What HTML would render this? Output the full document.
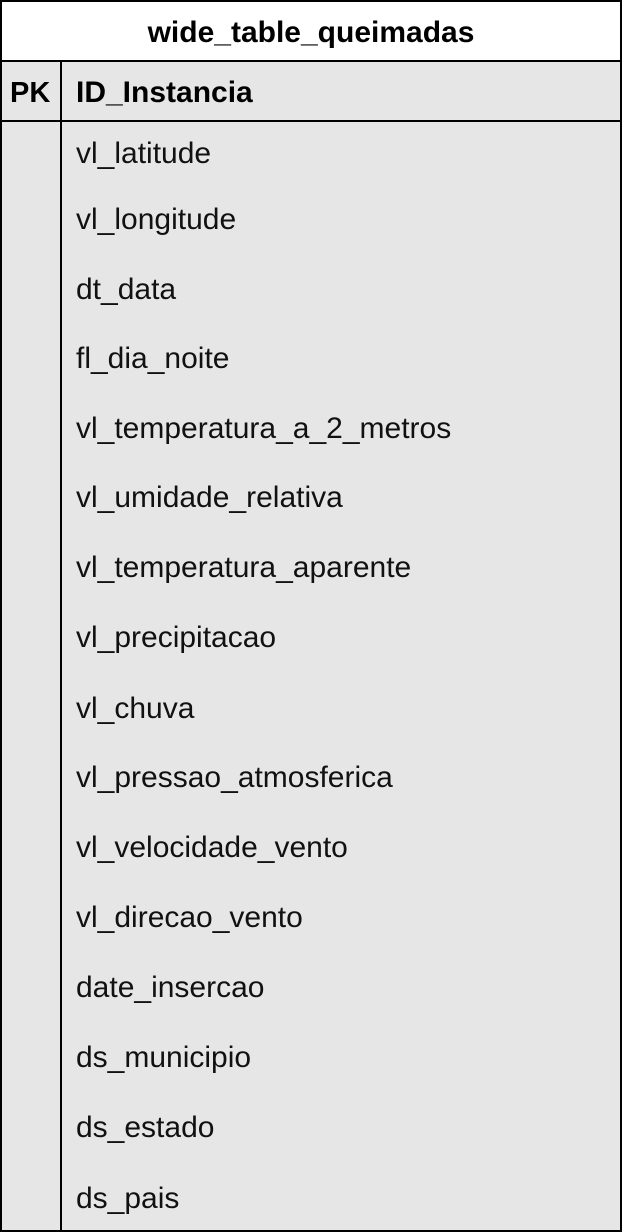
<!DOCTYPE html>
<html><head><style>
body{margin:0;width:622px;height:1232px;overflow:hidden;background:#fff;font-family:"Liberation Sans",Arial,sans-serif;}
.b{position:absolute;background:#000;}
.t{position:absolute;left:76px;font-size:30px;line-height:40px;color:#111;white-space:nowrap;}
</style></head><body>
<div style="position:absolute;left:0;top:61px;width:622px;height:1171px;background:#e6e6e6"></div>
<div class="b" style="left:0;top:0;width:622px;height:2px"></div>
<div class="b" style="left:0;top:0;width:2px;height:1232px"></div>
<div class="b" style="left:620px;top:0;width:2px;height:1232px"></div>
<div class="b" style="left:0;top:1230px;width:622px;height:2px"></div>
<div class="b" style="left:0;top:60px;width:622px;height:2px"></div>
<div class="b" style="left:0;top:120px;width:622px;height:2px"></div>
<div class="b" style="left:60px;top:61px;width:2px;height:1171px"></div>
<div style="position:absolute;left:0;top:13px;width:622px;text-align:center;font-size:30px;font-weight:bold;line-height:40px">wide_table_queimadas</div>
<div style="position:absolute;left:10px;top:73px;font-size:29px;font-weight:bold;line-height:40px">PK</div>
<div style="position:absolute;left:76px;top:73px;font-size:30px;font-weight:bold;line-height:40px">ID_Instancia</div>
<div class="t" style="top:134px">vl_latitude</div>
<div class="t" style="top:200px">vl_longitude</div>
<div class="t" style="top:270px">dt_data</div>
<div class="t" style="top:339px">fl_dia_noite</div>
<div class="t" style="top:409px">vl_temperatura_a_2_metros</div>
<div class="t" style="top:478px">vl_umidade_relativa</div>
<div class="t" style="top:548px">vl_temperatura_aparente</div>
<div class="t" style="top:618px">vl_precipitacao</div>
<div class="t" style="top:689px">vl_chuva</div>
<div class="t" style="top:758px">vl_pressao_atmosferica</div>
<div class="t" style="top:828px">vl_velocidade_vento</div>
<div class="t" style="top:898px">vl_direcao_vento</div>
<div class="t" style="top:968px">date_insercao</div>
<div class="t" style="top:1038px">ds_municipio</div>
<div class="t" style="top:1108px">ds_estado</div>
<div class="t" style="top:1179px">ds_pais</div>
</body></html>
